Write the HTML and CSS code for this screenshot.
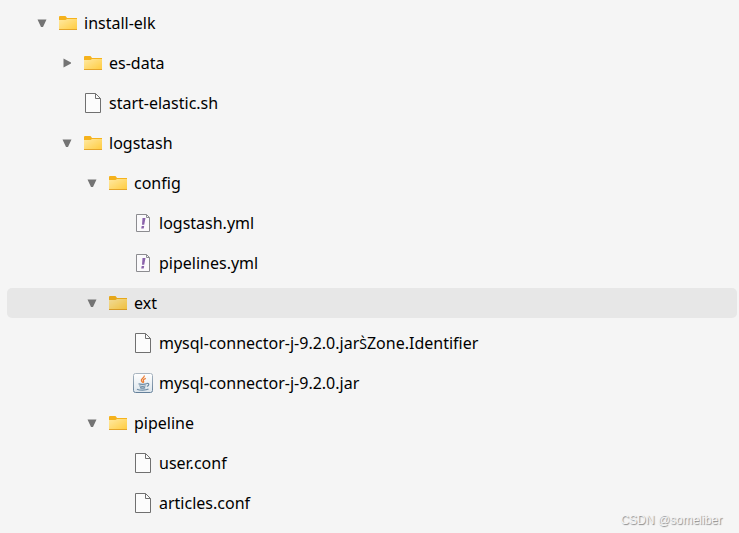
FILE: index.html
```html
<!DOCTYPE html>
<html lang="en">
<head>
<meta charset="utf-8">
<title>install-elk</title>
<link rel="stylesheet" href="styles.css">
</head>
<body>
<svg class="sprite" aria-hidden="true">
  <defs>
    <linearGradient id="gold" x1="0" y1="0" x2="1" y2="1"><stop offset="0" stop-color="#ffe9a2"/><stop offset="1" stop-color="#ffcb3d"/></linearGradient>
    <linearGradient id="steel" x1="0" y1="0" x2="0" y2="1"><stop offset="0" stop-color="#a9b5c0"/><stop offset="1" stop-color="#64809a"/></linearGradient>
    <linearGradient id="glass" x1="0" y1="0" x2="0" y2="1"><stop offset="0" stop-color="#ffffff"/><stop offset="1" stop-color="#dce5ec"/></linearGradient>
  </defs>
  <symbol id="down" viewBox="0 0 10 10"><path d="M.5 1.500h9L6 9H4z" fill="#747474"/></symbol>
  <symbol id="right" viewBox="0 0 10 10"><path d="M1.500.5v9L9 5.500v-1z" fill="#747474"/></symbol>
  <symbol id="folder" viewBox="0 0 20 20">
    <path d="M1 4q0-1 1-1h5q1 0 1.300 1l.7 1h10v3H1z" fill="#f5b21c"/>
    <path d="M1 7h6.500l1.500-1h10v11H1z" fill="url(#gold)"/>
    <path d="M1 16.500h18" stroke="#e5a52a"/>
  </symbol>
  <symbol id="file" viewBox="0 0 20 20">
    <path d="M2.500.5h10l5 5v14h-15z" fill="#fcfcfc" stroke="#707070"/>
    <path d="M12.500.5v5h5" fill="none" stroke="#707070"/>
  </symbol>
  <symbol id="yml" viewBox="0 0 20 20">
    <path d="M3.500 1.500h10l3 3v14h-13z" fill="#fbfafc" stroke="#8c8c90"/>
    <path d="M13.500 1.500v3h3" fill="none" stroke="#8c8c90"/>
    <path d="M9.500 5h3l-1.300 6.800H9zM8.700 13h2.500l-.5 2.500H8.200z" fill="#8a62ab"/>
  </symbol>
  <symbol id="jar" viewBox="0 0 20 20">
    <rect x=".5" y=".5" width="19" height="19" rx="2" fill="url(#glass)" stroke="url(#steel)"/>
    <path d="M11.200 2.500c.8 2.400-3.700 3.300-2.800 5.200.3.700 1 1.200 1.300 2M12.800 5.300c-1.800.7-3 1.500-2.400 2.600.4.700.6 1.100-.2 1.900" fill="none" stroke="#ec7c32" stroke-width="1.300"/>
    <path d="M5.500 10.800c1.500.7 6.500.7 8 0M6.300 12.800c1.800.7 4.800.7 6.400 0M7 14.600c1.500.6 3.800.6 5.200 0M13.500 10.500c3-.7 3 2.200.3 2.900M4 16.200c2.500 1.300 9 1.300 11.500-.1" fill="none" stroke="#6d8ba4" stroke-width="1.200"/>
  </symbol>
</svg>
<main>
  <ul class="tree">
    <li class="row level-0"><button class="toggle" aria-label="Collapse install-elk"><svg><use href="#down"/></svg></button><svg class="icon"><use href="#folder"/></svg><span class="name">install-elk</span></li>
    <li class="row level-1"><button class="toggle" aria-label="Expand es-data"><svg><use href="#right"/></svg></button><svg class="icon"><use href="#folder"/></svg><span class="name">es-data</span></li>
    <li class="row level-1"><span class="toggle"></span><svg class="icon"><use href="#file"/></svg><span class="name">start-elastic.sh</span></li>
    <li class="row level-1"><button class="toggle" aria-label="Collapse logstash"><svg><use href="#down"/></svg></button><svg class="icon"><use href="#folder"/></svg><span class="name">logstash</span></li>
    <li class="row level-2"><button class="toggle" aria-label="Collapse config"><svg><use href="#down"/></svg></button><svg class="icon"><use href="#folder"/></svg><span class="name">config</span></li>
    <li class="row level-3"><span class="toggle"></span><svg class="icon"><use href="#yml"/></svg><span class="name">logstash.yml</span></li>
    <li class="row level-3"><span class="toggle"></span><svg class="icon"><use href="#yml"/></svg><span class="name">pipelines.yml</span></li>
    <li class="row level-2 selected"><button class="toggle" aria-label="Collapse ext"><svg><use href="#down"/></svg></button><svg class="icon"><use href="#folder"/></svg><span class="name">ext</span></li>
    <li class="row level-3"><span class="toggle"></span><svg class="icon"><use href="#file"/></svg><span class="name">mysql-connector-j-9.2.0.jar<span class="mark">S&#768;</span>Zone.Identifier</span></li>
    <li class="row level-3"><span class="toggle"></span><svg class="icon"><use href="#jar"/></svg><span class="name">mysql-connector-j-9.2.0.jar</span></li>
    <li class="row level-2"><button class="toggle" aria-label="Collapse pipeline"><svg><use href="#down"/></svg></button><svg class="icon"><use href="#folder"/></svg><span class="name">pipeline</span></li>
    <li class="row level-3"><span class="toggle"></span><svg class="icon"><use href="#file"/></svg><span class="name">user.conf</span></li>
    <li class="row level-3"><span class="toggle"></span><svg class="icon"><use href="#file"/></svg><span class="name">articles.conf</span></li>
  </ul>
</main>
<div class="watermark">CSDN @someliber</div>
</body>
</html>
```
FILE: styles.css
```css
* { box-sizing: border-box; }

body {
  margin: 0;
  background: #f5f5f5;
  color: #000;
  font: 16px/30px "Segoe UI", "Noto Sans", "Open Sans", sans-serif;
}

.sprite { position: absolute; width: 0; height: 0; }

.tree {
  display: grid;
  gap: 10px;
  margin: 0;
  padding: 8px 2px 15px 7px;
  list-style: none;
}

.row {
  display: flex;
  align-items: center;
  height: 30px;
  border-radius: 5px;
}

.level-0 { padding-left: 23px; }
.level-1 { padding-left: 48px; }
.level-2 { padding-left: 73px; }
.level-3 { padding-left: 98px; }

.selected { background: #e7e7e7; }
.selected .icon { filter: brightness(0.94); }

.toggle {
  display: flex;
  flex: none;
  align-items: center;
  justify-content: center;
  width: 24px;
  height: 30px;
  padding: 0;
  border: 0;
  background: none;
}

.toggle svg { width: 10px; height: 10px; }

.icon {
  flex: none;
  width: 20px;
  height: 20px;
  margin: 0 6px 0 4px;
}

.name { white-space: nowrap; }
.mark { font-size: 14px; }

.watermark {
  position: absolute;
  right: 17px;
  bottom: 4px;
  color: #f5f5f5;
  font: 12px/18px "Liberation Sans", sans-serif;
  text-shadow: 1px 1px 1px #888;
}
```
